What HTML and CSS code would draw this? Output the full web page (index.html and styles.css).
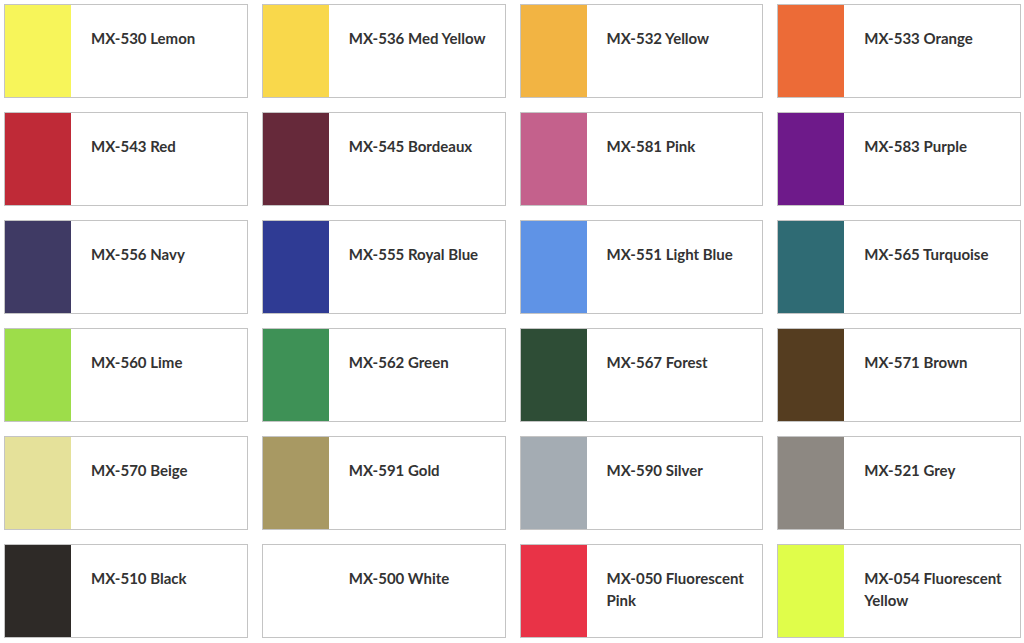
FILE: index.html
```html
<!DOCTYPE html>
<html lang="en">
<head>
    <meta charset="UTF-8">
    <meta name="viewport" content="width=device-width, initial-scale=1.0">
    <title>Colour Chart</title>
    <link rel="stylesheet" href="styles.css">
</head>
<body>
    <div class="chart">
        <div class="card"><div class="swatch lemon"></div><p class="name">MX-530 Lemon</p></div>
        <div class="card"><div class="swatch med-yellow"></div><p class="name">MX-536 Med Yellow</p></div>
        <div class="card"><div class="swatch yellow"></div><p class="name">MX-532 Yellow</p></div>
        <div class="card"><div class="swatch orange"></div><p class="name">MX-533 Orange</p></div>

        <div class="card"><div class="swatch red"></div><p class="name">MX-543 Red</p></div>
        <div class="card"><div class="swatch bordeaux"></div><p class="name">MX-545 Bordeaux</p></div>
        <div class="card"><div class="swatch pink"></div><p class="name">MX-581 Pink</p></div>
        <div class="card"><div class="swatch purple"></div><p class="name">MX-583 Purple</p></div>

        <div class="card"><div class="swatch navy"></div><p class="name">MX-556 Navy</p></div>
        <div class="card"><div class="swatch royal-blue"></div><p class="name">MX-555 Royal Blue</p></div>
        <div class="card"><div class="swatch light-blue"></div><p class="name">MX-551 Light Blue</p></div>
        <div class="card"><div class="swatch turquoise"></div><p class="name">MX-565 Turquoise</p></div>

        <div class="card"><div class="swatch lime"></div><p class="name">MX-560 Lime</p></div>
        <div class="card"><div class="swatch green"></div><p class="name">MX-562 Green</p></div>
        <div class="card"><div class="swatch forest"></div><p class="name">MX-567 Forest</p></div>
        <div class="card"><div class="swatch brown"></div><p class="name">MX-571 Brown</p></div>

        <div class="card"><div class="swatch beige"></div><p class="name">MX-570 Beige</p></div>
        <div class="card"><div class="swatch gold"></div><p class="name">MX-591 Gold</p></div>
        <div class="card"><div class="swatch silver"></div><p class="name">MX-590 Silver</p></div>
        <div class="card"><div class="swatch grey"></div><p class="name">MX-521 Grey</p></div>

        <div class="card"><div class="swatch black"></div><p class="name">MX-510 Black</p></div>
        <div class="card"><div class="swatch white"></div><p class="name">MX-500 White</p></div>
        <div class="card"><div class="swatch fluo-pink"></div><p class="name">MX-050 Fluorescent Pink</p></div>
        <div class="card"><div class="swatch fluo-yellow"></div><p class="name">MX-054 Fluorescent Yellow</p></div>
    </div>
</body>
</html>
```

FILE: styles.css
```css
body {
    font-family: Lato, "Open Sans", Arial, sans-serif;
    margin: 0;
    padding: 0;
    background-color: white;
}
.chart {
    display: grid;
    grid-template-columns: repeat(4, 1fr);
    grid-auto-rows: 94px;
    gap: 14px;
    padding: 4px 3px 4px 4px;
}
.card {
    display: flex;
    border: 1px solid #c4c4c4;
    background-color: white;
}
.swatch {
    width: 66px;
    flex-shrink: 0;
}
.name {
    margin: 0;
    padding: 22px 14px 0 20px;
    font-size: 15px;
    font-weight: bold;
    line-height: 22px;
    color: #333;
}

/* swatch colours */
.lemon { background-color: #f7f55a; }
.med-yellow { background-color: #f9d84b; }
.yellow { background-color: #f2b443; }
.orange { background-color: #ec6b37; }
.red { background-color: #bf2a37; }
.bordeaux { background-color: #66293a; }
.pink { background-color: #c4618c; }
.purple { background-color: #6e1a8a; }
.navy { background-color: #3f3a64; }
.royal-blue { background-color: #2f3b94; }
.light-blue { background-color: #5f93e6; }
.turquoise { background-color: #2f6b74; }
.lime { background-color: #9ddd4a; }
.green { background-color: #3e9156; }
.forest { background-color: #2e4d36; }
.brown { background-color: #553d20; }
.beige { background-color: #e5e19a; }
.gold { background-color: #a89963; }
.silver { background-color: #a4acb3; }
.grey { background-color: #8d8882; }
.black { background-color: #2e2a27; }
.white { background-color: white; }
.fluo-pink { background-color: #e93347; }
.fluo-yellow { background-color: #e0fd4a; }
```
